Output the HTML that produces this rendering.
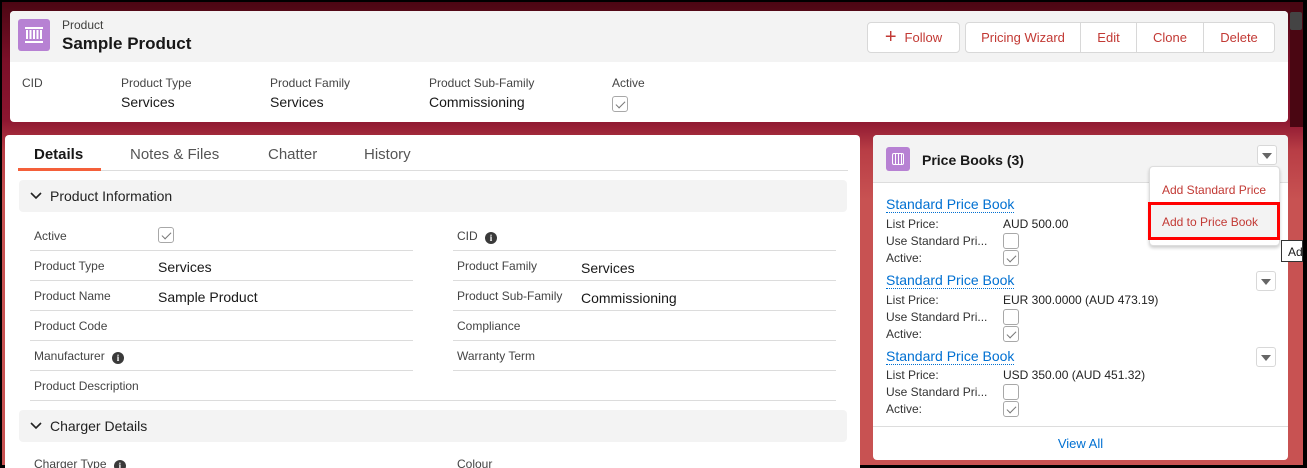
<!DOCTYPE html>
<html><head><style>
*{box-sizing:border-box;margin:0;padding:0}
html,body{width:1307px;height:468px;overflow:hidden}
body{position:relative;font-family:"Liberation Sans",sans-serif;color:#181818;
background:linear-gradient(180deg,#4a0612 0px,#7a0f28 60px,#8c1630 120px,#b83d45 150px,#c85252 200px,#c85252 468px);}
.a{position:absolute}
.card{position:absolute;background:#fff;border-radius:4px}
.lbl{font-size:12px;color:#444}
.val{font-size:14px;color:#181818}
.btn{position:absolute;top:22px;height:31px;border:1px solid #d8d8d8;background:#fff;color:#c23934;font-size:13px;display:flex;align-items:center;justify-content:center}
.cb{position:absolute;width:16px;height:16px;border:1px solid #a8a8a8;border-radius:3px;background:#fff}
.cb.c::after{content:"";position:absolute;left:5px;top:2px;width:4px;height:8px;border:solid #777;border-width:0 1.5px 1.5px 0;transform:rotate(45deg)}
.line{position:absolute;height:1px;background:#dcdcdc}
.info{display:inline-block;width:12px;height:12px;border-radius:50%;background:#3a3a3a;color:#fff;font-size:9px;font-weight:bold;text-align:center;line-height:12px;vertical-align:-1px;margin-left:4px;font-family:"Liberation Serif",serif}
.link{color:#0070d2;font-size:14px;border-bottom:1px dotted #0070d2}
.dd{position:absolute;width:20px;height:20px;border:1px solid #d8d8d8;border-radius:3px;background:#fff}
.dd::after{content:"";position:absolute;left:4px;top:7px;border-left:5px solid transparent;border-right:5px solid transparent;border-top:6px solid #666}
</style></head><body>
<div class="a" style="left:1290px;top:2px;width:13px;height:125px;background:#4a0612"></div>
<div class="a" style="left:1290px;top:12px;width:12px;height:18px;background:#444;border-radius:2px"></div>
<div class="a" style="left:0;top:0;width:1307px;height:2px;background:#000"></div>
<div class="a" style="left:0;top:465px;width:1307px;height:3px;background:#000"></div>
<div class="a" style="left:0;top:0;width:2px;height:468px;background:#000"></div>
<div class="a" style="left:1303px;top:0;width:4px;height:468px;background:#000"></div>

<!-- header card -->
<div class="card" style="left:10px;top:11px;width:1278px;height:111px;overflow:hidden">
 <div class="a" style="left:0;top:0;width:1278px;height:51px;background:#f3f3f3"></div>
 <div class="a" style="left:8px;top:8px;width:32px;height:32px;background:#b781d3;border-radius:3px">
  <div class="a" style="left:7px;top:8px;width:18px;height:2px;background:#fff"></div>
  <div class="a" style="left:8px;top:11px;width:16px;height:9px;background:repeating-linear-gradient(90deg,#fff 0 2px,transparent 2px 3.5px)"></div>
  <div class="a" style="left:7px;top:22px;width:18px;height:2px;background:#fff"></div>
 </div>
 <div class="a" style="left:52px;top:7px;font-size:12px;color:#3e3e3c">Product</div>
 <div class="a" style="left:52px;top:23px;font-size:17px;font-weight:bold">Sample Product</div>
 <div class="a lbl" style="left:12px;top:65px">CID</div>
 <div class="a lbl" style="left:111px;top:65px">Product Type</div>
 <div class="a val" style="left:111px;top:83px">Services</div>
 <div class="a lbl" style="left:260px;top:65px">Product Family</div>
 <div class="a val" style="left:260px;top:83px">Services</div>
 <div class="a lbl" style="left:419px;top:65px">Product Sub-Family</div>
 <div class="a val" style="left:419px;top:83px">Commissioning</div>
 <div class="a lbl" style="left:602px;top:65px">Active</div>
 <div class="cb c" style="left:602px;top:85px"></div>
</div>
<div class="btn" style="left:867px;width:93px;border-radius:4px"><span style="font-size:20px;margin-right:8px;font-weight:300">+</span>Follow</div>
<div class="btn" style="left:965px;width:116px;border-radius:4px 0 0 4px">Pricing Wizard</div>
<div class="btn" style="left:1080px;width:57px;border-radius:0">Edit</div>
<div class="btn" style="left:1136px;width:68px;border-radius:0">Clone</div>
<div class="btn" style="left:1203px;width:72px;border-radius:0 4px 4px 0">Delete</div>

<!-- left card -->
<div class="card" style="left:5px;top:135px;width:855px;height:340px">
 <div class="a" style="left:29px;top:11px;font-size:15px;font-weight:bold">Details</div>
 <div class="a" style="left:125px;top:11px;font-size:15px;color:#555">Notes &amp; Files</div>
 <div class="a" style="left:263px;top:11px;font-size:15px;color:#555">Chatter</div>
 <div class="a" style="left:359px;top:11px;font-size:15px;color:#555">History</div>
 <div class="a" style="left:13px;top:35px;width:830px;height:1px;background:#ddd"></div>
 <div class="a" style="left:13px;top:33px;width:83px;height:3px;background:#f4603a"></div>
 <div class="a" style="left:14px;top:45px;width:828px;height:32px;background:#f3f3f3;border-radius:4px"></div>
 <svg class="a" style="left:25px;top:56px" width="12" height="10" viewBox="0 0 12 10"><path d="M1 2l5 5 5-5" fill="none" stroke="#222" stroke-width="1.6"/></svg>
 <div class="a" style="left:45px;top:53px;font-size:14px;color:#222">Product Information</div>
 <div class="a" style="left:14px;top:275px;width:828px;height:32px;background:#f3f3f3;border-radius:4px"></div>
 <svg class="a" style="left:25px;top:286px" width="12" height="10" viewBox="0 0 12 10"><path d="M1 2l5 5 5-5" fill="none" stroke="#222" stroke-width="1.6"/></svg>
 <div class="a" style="left:45px;top:283px;font-size:14px;color:#222">Charger Details</div>
 <div class="a lbl" style="left:29px;top:322px">Charger Type <span class="info">i</span></div>
 <div class="a lbl" style="left:452px;top:322px">Colour</div>
</div>
<!-- rows left -->
<div class="a lbl" style="left:34px;top:229px">Active</div><div class="cb c" style="left:158px;top:227px"></div>
<div class="a lbl" style="left:34px;top:259px">Product Type</div><div class="a val" style="left:158px;top:259px">Services</div>
<div class="a lbl" style="left:34px;top:289px">Product Name</div><div class="a val" style="left:158px;top:289px">Sample Product</div>
<div class="a lbl" style="left:34px;top:319px">Product Code</div>
<div class="a lbl" style="left:34px;top:349px">Manufacturer <span class="info">i</span></div>
<div class="a lbl" style="left:34px;top:379px">Product Description</div>
<div class="line" style="left:30px;top:250px;width:383px"></div>
<div class="line" style="left:30px;top:280px;width:383px"></div>
<div class="line" style="left:30px;top:310px;width:383px"></div>
<div class="line" style="left:30px;top:340px;width:383px"></div>
<div class="line" style="left:30px;top:370px;width:383px"></div>
<div class="a lbl" style="left:457px;top:229px">CID <span class="info">i</span></div>
<div class="a lbl" style="left:457px;top:259px">Product Family</div><div class="a val" style="left:581px;top:260px">Services</div>
<div class="a lbl" style="left:457px;top:289px">Product Sub-Family</div><div class="a val" style="left:581px;top:290px">Commissioning</div>
<div class="a lbl" style="left:457px;top:319px">Compliance</div>
<div class="a lbl" style="left:457px;top:349px">Warranty Term</div>
<div class="line" style="left:453px;top:250px;width:383px"></div>
<div class="line" style="left:453px;top:280px;width:383px"></div>
<div class="line" style="left:453px;top:310px;width:383px"></div>
<div class="line" style="left:453px;top:340px;width:383px"></div>
<div class="line" style="left:453px;top:370px;width:383px"></div>
<div class="line" style="left:30px;top:400px;width:806px"></div>

<!-- right card -->
<div class="card" style="left:873px;top:135px;width:415px;height:325px;overflow:hidden">
 <div class="a" style="left:0;top:0;width:415px;height:48px;background:#f3f3f3;border-bottom:1px solid #ddd"></div>
 <div class="a" style="left:13px;top:12px;width:24px;height:24px;background:#b781d3;border-radius:3px">
  <div class="a" style="left:6px;top:6px;width:12px;height:12px;border:1.5px solid #fff;border-radius:2px;background:repeating-linear-gradient(90deg,transparent 0 2px,#fff 2px 3px)"></div>
 </div>
 <div class="a" style="left:49px;top:17px;font-size:14px;font-weight:bold">Price Books (3)</div>
 <div class="dd" style="left:384px;top:10px"></div>

 <div class="a" style="left:13px;top:61px"><span class="link">Standard Price Book</span></div>
 <div class="a lbl" style="left:13px;top:82px;color:#333">List Price:</div><div class="a lbl" style="left:130px;top:82px;color:#222">AUD 500.00</div>
 <div class="a lbl" style="left:13px;top:99px;color:#333">Use Standard Pri...</div><div class="cb" style="left:130px;top:98px"></div>
 <div class="a lbl" style="left:13px;top:116px;color:#333">Active:</div><div class="cb c" style="left:130px;top:115px"></div>

 <div class="a" style="left:13px;top:137px"><span class="link">Standard Price Book</span></div>
 <div class="dd" style="left:383px;top:136px"></div>
 <div class="a lbl" style="left:13px;top:158px;color:#333">List Price:</div><div class="a lbl" style="left:130px;top:158px;color:#222">EUR 300.0000 (AUD 473.19)</div>
 <div class="a lbl" style="left:13px;top:175px;color:#333">Use Standard Pri...</div><div class="cb" style="left:130px;top:174px"></div>
 <div class="a lbl" style="left:13px;top:192px;color:#333">Active:</div><div class="cb c" style="left:130px;top:191px"></div>

 <div class="a" style="left:13px;top:213px"><span class="link">Standard Price Book</span></div>
 <div class="dd" style="left:383px;top:212px"></div>
 <div class="a lbl" style="left:13px;top:233px;color:#333">List Price:</div><div class="a lbl" style="left:130px;top:233px;color:#222">USD 350.00 (AUD 451.32)</div>
 <div class="a lbl" style="left:13px;top:250px;color:#333">Use Standard Pri...</div><div class="cb" style="left:130px;top:249px"></div>
 <div class="a lbl" style="left:13px;top:267px;color:#333">Active:</div><div class="cb c" style="left:130px;top:266px"></div>

 <div class="a" style="left:0;top:291px;width:415px;height:1px;background:#ddd"></div>
 <div class="a" style="left:0;top:301px;width:415px;text-align:center;font-size:13px;color:#0070d2">View All</div>
</div>

<!-- dropdown menu -->
<div class="a" style="left:1149px;top:166px;width:131px;height:80px;background:#fff;border:1px solid #ddd;border-radius:4px;box-shadow:0 2px 3px rgba(0,0,0,.2)"></div>
<div class="a" style="left:1162px;top:183px;font-size:12px;color:#c23934">Add Standard Price</div>
<div class="a" style="left:1148px;top:202px;width:132px;height:38px;background:#f3f3f3;border:3px solid #f00"></div>
<div class="a" style="left:1162px;top:215px;font-size:12px;color:#c23934">Add to Price Book</div>
<div class="a" style="left:1281px;top:240px;width:22px;height:22px;background:#fff;border:1px solid #333;font-size:12px;padding:4px 0 0 6px;overflow:hidden">Add</div>
</body></html>
